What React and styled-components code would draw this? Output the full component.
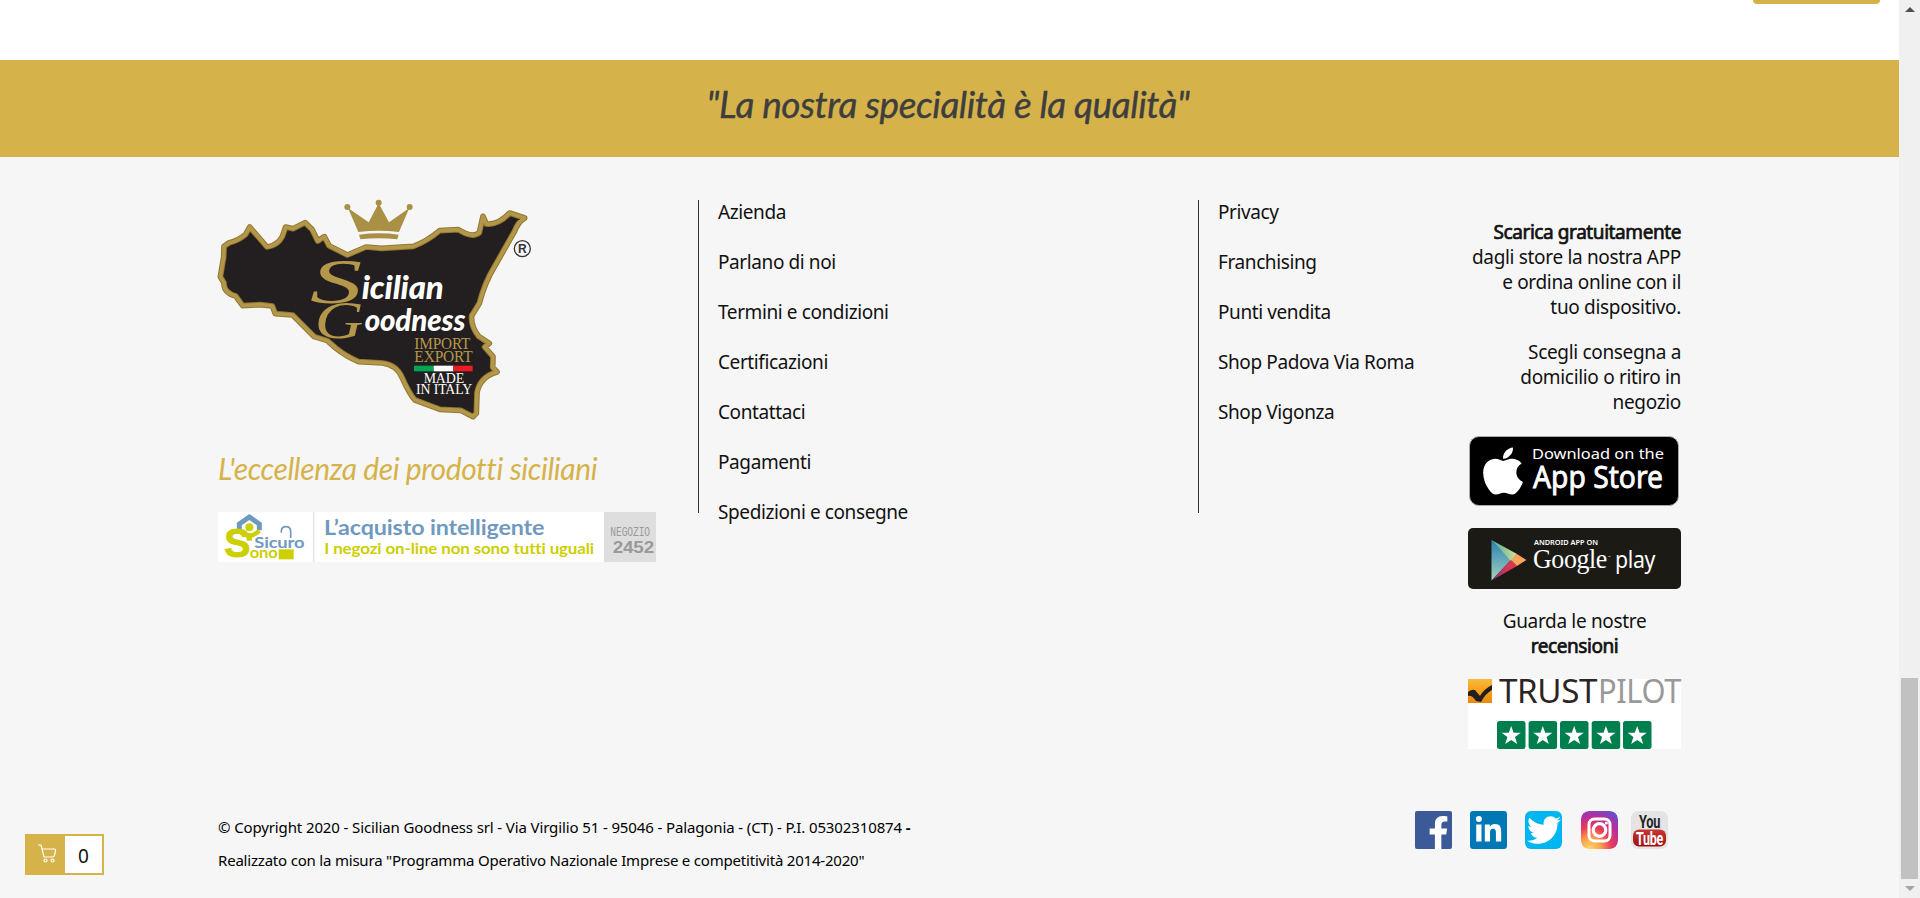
import React from 'react';
import styled, { createGlobalStyle } from 'styled-components';
import { FaApple, FaFacebookF, FaLinkedinIn, FaTwitter } from 'react-icons/fa';

const GOLD = '#d5b34a';

const GlobalStyle = createGlobalStyle`
  *, *::before, *::after { box-sizing: border-box; }
  body { margin: 0; overflow: hidden; background: #fff; }
  svg { display: block; flex-shrink: 0; overflow: visible; }
`;

const Window = styled.div`
  display: flex;
  width: 1920px;
  height: 898px;
  overflow: hidden;
  color: #111;
  font-family: "Noto Sans", sans-serif;
  font-size: 19px;
  line-height: 25px;
  letter-spacing: -0.4px;
`;

const Page = styled.main`
  display: flex;
  flex-direction: column;
  width: 1899px;
`;

const PageEnd = styled.div`
  display: flex;
  justify-content: flex-end;
  height: 60px;
  padding-right: 19px;
`;

const ButtonEdge = styled.div`
  width: 127px;
  height: 4px;
  border-radius: 0 0 4px 4px;
  background: ${GOLD};
`;

const Motto = styled.h2`
  display: flex;
  justify-content: center;
  height: 97px;
  margin: 0;
  padding: 18px 3px 0 0;
  -webkit-text-stroke: 0.4px #3e3e3e;
  background: ${GOLD};
  color: #3e3e3e;
  font: italic 400 37px/52px Lato, sans-serif;
  letter-spacing: -0.42px;
`;

const Footer = styled.footer`
  flex: 1;
  padding: 43px 218px 0;
  background: #f6f6f6;
`;

const Columns = styled.div`
  display: flex;
  height: 590px;
`;

const Brand = styled.section`
  width: 480px;
`;

const Tagline = styled.p`
  margin: 26px 0 22px;
  color: ${GOLD};
  font: italic 400 30px/44px Lato, sans-serif;
  letter-spacing: -0.4px;
`;

const LinkList = styled.ul`
  display: flex;
  flex-direction: column;
  gap: 25px;
  width: ${(p) => p.$width}px;
  height: 313px;
  margin: 0;
  padding: 0 0 0 19px;
  border-left: 1px solid #333;
  list-style: none;
  white-space: nowrap;
`;

const FooterLink = styled.a`
  display: block;
  color: inherit;
  text-decoration: none;
`;

const Apps = styled.section`
  width: 213px;
  padding-top: 20px;
`;

const AppText = styled.p`
  margin: 0 0 20px;
  text-align: ${(p) => p.$align || 'right'};
  letter-spacing: -0.33px;
  white-space: nowrap;
`;

const Strong = styled.strong`
  font-weight: 400;
  letter-spacing: -0.42px;
  -webkit-text-stroke: 0.7px #111;
`;

const AppStore = styled.a`
  display: flex;
  align-items: center;
  gap: 1px;
  width: 210px;
  height: 70px;
  margin: 21px 0 22px 1px;
  padding-left: 6px;
  border: 1px solid #aaa;
  border-radius: 10px;
  background: #000;
  color: #fff;
`;

const GooglePlay = styled.a`
  display: block;
  width: 213px;
  height: 61px;
  margin-bottom: 20px;
  border-radius: 5px;
  background: #1b1a15;
`;

const Trustpilot = styled.div`
  width: 213px;
  height: 70px;
  background: #fff;
`;

const Bottom = styled.div`
  display: flex;
  justify-content: space-between;
  padding: 21px 13px 0 0;
`;

const Legal = styled.div`
  color: #000;
  font-size: 15px;
  line-height: 33px;
`;

const LegalLine = styled.p`
  margin: 0;
  letter-spacing: ${(p) => p.$track}px;
  white-space: nowrap;
`;

const Social = styled.nav`
  display: flex;
  gap: 18px;
`;

const SocialTile = styled.a`
  display: flex;
  justify-content: center;
  align-items: ${(p) => p.$align || 'center'};
  width: 37px;
  height: 38px;
  margin-left: ${(p) => p.$shift || 0}px;
  padding-left: ${(p) => p.$inset || 0}px;
  overflow: hidden;
  border-radius: ${(p) => p.$radius}px;
  background: ${(p) => p.$bg};
  color: #fff;
`;

const Cart = styled.button`
  position: fixed;
  left: 25px;
  top: 834px;
  display: flex;
  width: 79px;
  height: 41px;
  padding: 0;
  border: 2px solid ${GOLD};
  background: #fff;
  color: #111;
  font: 19px/1 "Noto Sans", sans-serif;
`;

const CartIcon = styled.span`
  display: flex;
  justify-content: center;
  width: 38px;
  height: 37px;
  padding: 8px 0 0 1px;
  background: ${GOLD};
`;

const CartCount = styled.span`
  flex: 1;
  padding-top: 11px;
  text-align: center;
`;

const Scrollbar = styled.div`
  display: flex;
  flex-direction: column;
  align-items: center;
  width: 21px;
  padding: 7px 0;
  background: #f0f0f0;
`;

const Arrow = styled.i`
  width: 0;
  height: 0;
  border: solid transparent;
  border-width: ${(p) => (p.$up ? '0 5px 5px' : '5px 5px 0')};
  border-${(p) => (p.$up ? 'bottom' : 'top')}-color: ${(p) => (p.$up ? '#505050' : '#a3a3a3')};
`;

const Thumb = styled.div`
  width: 17px;
  height: 201px;
  margin: 666px 0 7px;
  background: #c1c1c1;
`;

const ISLAND =
  'M72 199 L88 188 Q115 182 137 163 L149 141 L201 201 Q232 197 247 170 L257 141 L279 146 L315 128 L336 148 L353 183 L373 170 L387 197 L442 225 L498 201 L545 205 L640 199 Q680 185 719 152 L775 149 Q818 176 838 158 L849 109 L859 132 Q895 136 929 99 L974 114 Q954 126 943 155 L884 259 Q853 310 838 370 L815 407 Q812 440 836 469 L868 490 L854 501 L879 530 L878 562 L891 576 Q840 590 831 638 L829 700 L819 710 L782 691 L720 688 L645 660 Q630 645 606 592 Q590 555 548 549 L476 545 Q440 530 407 504 L382 482 L343 470 L278 405 L226 401 L217 378 L180 374 L128 377 L107 348 Q70 338 72 308 L61 290 L71 232 Z';

const Logo = () => (
  <svg width="315" height="220" viewBox="54 60 945 660" aria-label="Sicilian Goodness">
    <path d={ISLAND} fill="#231f20" stroke="#8f7830" strokeWidth="17" strokeLinejoin="round" />
    <path d={ISLAND} fill="none" stroke="#b4974a" strokeWidth="11" strokeLinejoin="round" />
    <g fill="#aa9044">
      <circle cx="442" cy="81" r="9" /><circle cx="536" cy="68" r="9" /><circle cx="629" cy="81" r="9" />
      <path d="M444 84 L506 127 L536 70 L567 127 L628 84 L597 156 Q536 148 475 156 Z" />
      <path d="M477 164 Q536 156 596 164 L592 178 Q536 172 481 178 Z" />
    </g>
    <g fill="#b4974a" fontFamily="Liberation Serif, serif" fontStyle="italic">
      <text x="330" y="370" fontSize="190" textLength="156" lengthAdjust="spacingAndGlyphs">S</text>
      <text x="344" y="475" fontSize="158" textLength="146" lengthAdjust="spacingAndGlyphs">G</text>
    </g>
    <g fill="#fff" fontFamily="Lato, sans-serif" fontStyle="italic" fontWeight="900">
      <text x="485" y="357" fontSize="96" textLength="246" lengthAdjust="spacingAndGlyphs">icilian</text>
      <text x="494" y="452" fontSize="92" textLength="302" lengthAdjust="spacingAndGlyphs">oodness</text>
    </g>
    <g fontFamily="Liberation Serif, serif" fontSize="47">
      <text x="643" y="508" fill="#b4974a" textLength="168" lengthAdjust="spacingAndGlyphs">IMPORT</text>
      <text x="643" y="547" fill="#b4974a" textLength="175" lengthAdjust="spacingAndGlyphs">EXPORT</text>
      <text x="671" y="609" fill="#fff" fontSize="43" textLength="121" lengthAdjust="spacingAndGlyphs">MADE</text>
      <text x="648" y="643" fill="#fff" fontSize="43" textLength="168" lengthAdjust="spacingAndGlyphs">IN ITALY</text>
    </g>
    <path fill="#00a651" d="M642 557h59v17h-59z" />
    <path fill="#fff" d="M701 557h59v17h-59z" />
    <path fill="#ed1c24" d="M760 557h58v17h-58z" />
    <circle cx="967" cy="206" r="24" fill="none" stroke="#333" strokeWidth="4" />
    <text x="967" y="219" fontFamily="Liberation Sans, sans-serif" fontWeight="700" fontSize="36" textAnchor="middle" fill="#333">R</text>
  </svg>
);

const SafeShopBanner = () => (
  <svg width="438" height="50" viewBox="54 246 1314 150">
    <path fill="#fff" d="M54 246h1158v150H54z" />
    <path fill="#e4e4e4" d="M339 246h4v150h-4z" />
    <path fill="#dedede" d="M1212 246h156v150h-156z" />
    <path d="M118 301 V282 L148 261 L178 282 V301" fill="none" stroke="#7099bf" strokeWidth="15" />
    <text x="73" y="382" fontFamily="Liberation Sans, sans-serif" fontWeight="700" fontSize="122" fill="#cccf00" stroke="#cccf00" strokeWidth="3" textLength="78" lengthAdjust="spacingAndGlyphs">S</text>
    <g fontFamily="Lato, sans-serif" fontWeight="700">
      <text x="149" y="384" fontSize="48" fill="#cccf00" textLength="84" lengthAdjust="spacingAndGlyphs">ono</text>
      <text x="163" y="354" fontSize="48" fill="#7099bf" textLength="150" lengthAdjust="spacingAndGlyphs">Sicuro</text>
    </g>
    <circle cx="148" cy="292" r="12" fill="#cccf00" />
    <path d="M118 302 Q148 331 178 302" fill="none" stroke="#cccf00" strokeWidth="13" />
    <path d="M148 317v15" stroke="#cccf00" strokeWidth="16" />
    <path d="M244 308v-4q0-14 14-14t14 14v20" fill="none" stroke="#7099bf" strokeWidth="5" />
    <path fill="#cccf00" d="M236 358h45v30h-45z" />
    <g fontFamily="Lato, sans-serif" fontWeight="700">
      <text x="372" y="314" fontSize="64" fill="#7099bf" textLength="661" lengthAdjust="spacingAndGlyphs">L’acquisto intelligente</text>
      <text x="373" y="371" fontSize="46" fill="#cccf00" textLength="809" lengthAdjust="spacingAndGlyphs">I negozi on-line non sono tutti uguali</text>
    </g>
    <text x="1231" y="317" fontFamily="Liberation Mono, monospace" fontSize="40" fill="#999" textLength="119" lengthAdjust="spacingAndGlyphs">NEGOZIO</text>
    <text x="1238" y="369" fontFamily="Liberation Sans, sans-serif" fontWeight="700" fontSize="49" fill="#999" textLength="124" lengthAdjust="spacingAndGlyphs">2452</text>
  </svg>
);

const AppStoreLabel = () => (
  <svg width="134" height="58" viewBox="0 0 134 58" fill="#fff" fontFamily="Noto Sans, sans-serif" letterSpacing="0">
    <text x="1" y="17" fontSize="15" textLength="132" lengthAdjust="spacingAndGlyphs">Download on the</text>
    <text x="2" y="46" fontSize="31" stroke="#fff" strokeWidth=".8" textLength="130" lengthAdjust="spacingAndGlyphs">App Store</text>
  </svg>
);

const GooglePlayArt = () => (
  <svg width="213" height="61" viewBox="0 0 213 61">
    <defs>
      <linearGradient id="play" x2="0" y2="1"><stop stopColor="#2c80b8" /><stop offset="1" stopColor="#9fd3b9" /></linearGradient>
      <linearGradient id="top"><stop stopColor="#4ba49f" /><stop offset="1" stopColor="#d2e592" /></linearGradient>
      <linearGradient id="low"><stop stopColor="#75348b" /><stop offset=".6" stopColor="#d83453" /></linearGradient>
    </defs>
    <path fill="url(#play)" d="M23.5 12v40.5L43 32z" />
    <path fill="url(#top)" d="M23.5 12 49 26 43 33z" />
    <path fill="url(#low)" d="M23.5 52.5 43 32 49 38z" />
    <path fill="#f9a45c" d="M49 26 58.5 32 49 38 43 32z" />
    <text x="66" y="17" fill="#fff" fontFamily="Noto Sans, sans-serif" fontWeight="600" fontSize="7.8" letterSpacing="0" textLength="64" lengthAdjust="spacingAndGlyphs">ANDROID APP ON</text>
    <text x="65" y="40" fill="#fff" fontFamily="Liberation Serif, serif" fontSize="27" textLength="74" lengthAdjust="spacingAndGlyphs">Google</text>
    <text x="140" y="30" fill="#fff" fontFamily="Noto Sans, sans-serif" fontSize="3">™</text>
    <text x="147" y="40" fill="#fff" fontFamily="Noto Sans, sans-serif" fontSize="24" textLength="40" lengthAdjust="spacingAndGlyphs">play</text>
  </svg>
);

const STAR = 'M0-10 2.4-3.2H9.6L3.8 1.1 6 8.1 0 3.9-6 8.1-3.8 1.1-9.6-3.2H-2.4Z';

const TrustpilotArt = () => (
  <svg width="213" height="70" viewBox="0 0 213 70">
    <defs>
      <linearGradient id="amber" x2="0" y2="1"><stop stopColor="#f6bb42" /><stop offset=".4" stopColor="#f9a51b" /><stop offset="1" stopColor="#e78a10" /></linearGradient>
    </defs>
    <path fill="url(#amber)" d="M0 0h24v24H0z" />
    <path fill="#231f20" d="M0 13Q4 10 7 11L12 17Q16 10 24 6V11Q17 15 13 23L8 22Q4 16 0 17Z" />
    <g fontFamily="Noto Sans, sans-serif" fontSize="32.5">
      <text x="31" y="23.5" fill="#2b2523" textLength="98" lengthAdjust="spacingAndGlyphs">TRUST</text>
      <text x="130" y="23.5" fill="#999" textLength="83" lengthAdjust="spacingAndGlyphs">PILOT</text>
    </g>
    {[29, 60.6, 92, 123.7, 155].map((x) => (
      <g key={x} transform={`translate(${x} 42)`}>
        <rect width="28.5" height="28" rx="2.5" fill="#007f4e" />
        <path d={STAR} transform="translate(14.2 15)" fill="#fff" />
      </g>
    ))}
  </svg>
);

const Instagram = () => (
  <svg width="37" height="38" viewBox="0 0 37 38">
    <defs>
      <radialGradient id="insta" cx=".25" cy="1" r="1.15">
        <stop stopColor="#ffd76b" /><stop offset=".25" stopColor="#fba34d" /><stop offset=".5" stopColor="#e83c5a" />
        <stop offset=".75" stopColor="#b52d9d" /><stop offset="1" stopColor="#6450cf" />
      </radialGradient>
    </defs>
    <rect width="37" height="38" rx="8" fill="url(#insta)" />
    <rect x="8" y="8" width="21" height="22" rx="5.5" fill="none" stroke="#fff" strokeWidth="3" />
    <circle cx="18.5" cy="19" r="6.3" fill="none" stroke="#fff" strokeWidth="3.2" />
    <circle cx="25.3" cy="12" r="1.6" fill="#fff" />
  </svg>
);

const YouTube = () => (
  <svg width="37" height="38" viewBox="0 0 37 38" fontFamily="Roboto, sans-serif" fontWeight="700">
    <defs>
      <linearGradient id="tube" x2="0" y2="1"><stop stopColor="#c83737" /><stop offset="1" stopColor="#a30c0c" /></linearGradient>
    </defs>
    <rect x="2" y="18.5" width="33" height="17" rx="6" fill="url(#tube)" />
    <text x="8" y="17" fontSize="18" fill="#222" textLength="21" lengthAdjust="spacingAndGlyphs">You</text>
    <text x="5" y="33.5" fontSize="17.5" fill="#fff" textLength="27" lengthAdjust="spacingAndGlyphs">Tube</text>
  </svg>
);

const company = ['Azienda', 'Parlano di noi', 'Termini e condizioni', 'Certificazioni', 'Contattaci', 'Pagamenti', 'Spedizioni e consegne'];
const shops = ['Privacy', 'Franchising', 'Punti vendita', 'Shop Padova Via Roma', 'Shop Vigonza'];

const Links = ({ items, width }) => (
  <LinkList $width={width}>
    {items.map((item) => (
      <li key={item}><FooterLink>{item}</FooterLink></li>
    ))}
  </LinkList>
);

export default function App() {
  return (
    <Window>
      <GlobalStyle />
      <Page>
        <PageEnd><ButtonEdge /></PageEnd>
        <Motto>"La nostra specialità è la qualità"</Motto>
        <Footer>
          <Columns>
            <Brand>
              <Logo />
              <Tagline>L'eccellenza dei prodotti siciliani</Tagline>
              <SafeShopBanner />
            </Brand>
            <Links items={company} width={500} />
            <Links items={shops} width={270} />
            <Apps>
              <AppText>
                <Strong>Scarica gratuitamente</Strong><br />
                dagli store la nostra APP<br />e ordina online con il<br />tuo dispositivo.
              </AppText>
              <AppText>Scegli consegna a<br />domicilio o ritiro in<br />negozio</AppText>
              <AppStore><FaApple size={54} /><AppStoreLabel /></AppStore>
              <GooglePlay><GooglePlayArt /></GooglePlay>
              <AppText $align="center">Guarda le nostre<br /><Strong>recensioni</Strong></AppText>
              <Trustpilot><TrustpilotArt /></Trustpilot>
            </Apps>
          </Columns>
          <Bottom>
            <Legal>
              <LegalLine $track={-0.12}>
                © Copyright 2020 - Sicilian Goodness srl - Via Virgilio 51 - 95046 - Palagonia - (CT) - P.I. 05302310874 <b>-</b>
              </LegalLine>
              <LegalLine $track={-0.2}>
                Realizzato con la misura "Programma Operativo Nazionale Imprese e competitività 2014-2020"
              </LegalLine>
            </Legal>
            <Social>
              <SocialTile $bg="#3d5a98" $radius={2} $align="flex-end" $inset={9}><FaFacebookF size={33} /></SocialTile>
              <SocialTile $bg="#0177b5" $radius={3}><FaLinkedinIn size={29} /></SocialTile>
              <SocialTile $bg="#00b6f1" $radius={6}><FaTwitter size={34} /></SocialTile>
              <SocialTile $bg="transparent" $radius={8} $shift={1}><Instagram /></SocialTile>
              <SocialTile $bg="#e4e4e4" $radius={7} $shift={-5}><YouTube /></SocialTile>
            </Social>
          </Bottom>
        </Footer>
      </Page>
      <Scrollbar>
        <Arrow $up />
        <Thumb />
        <Arrow />
      </Scrollbar>
      <Cart>
        <CartIcon>
          <svg width="20" height="19" viewBox="0 0 20 19" fill="none" stroke="#fff" strokeWidth="1.2">
            <path d="M1 1h3l3 12h10M5 5h12q2 0 1.5 2l-1 4q-.5 2-2 2" />
            <circle cx="8.5" cy="16.5" r="1.5" /><circle cx="15.5" cy="16.5" r="1.5" />
          </svg>
        </CartIcon>
        <CartCount>0</CartCount>
      </Cart>
    </Window>
  );
}
